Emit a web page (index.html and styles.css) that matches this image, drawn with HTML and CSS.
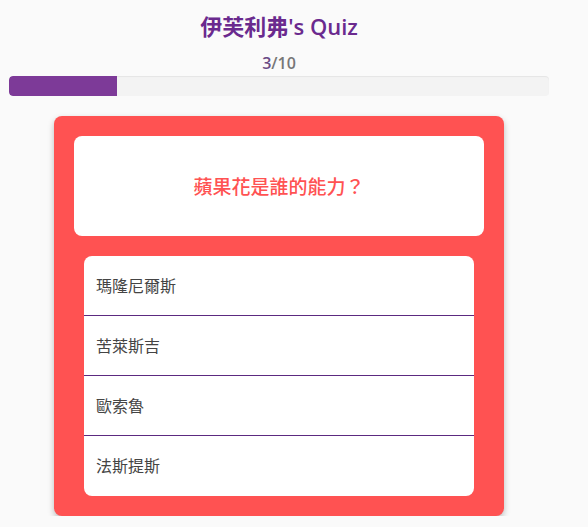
FILE: index.html
```html
<!DOCTYPE html>
<html lang="zh-Hant">
<head>
<meta charset="utf-8">
<link rel="stylesheet" href="styles.css">
</head>
<body>
<div class="wrap">
  <h1 class="title">伊芙利弗's Quiz</h1>
  <div class="count"><span class="cur">3</span>/10</div>
  <div class="track"><div class="fill" style="width:20%"></div></div>
  <div class="card">
    <div class="question">蘋果花是誰的能力？</div>
    <ul class="answers">
      <li>瑪隆尼爾斯</li>
      <li>苦萊斯吉</li>
      <li>歐索魯</li>
      <li>法斯提斯</li>
    </ul>
  </div>
</div>
</body>
</html>
```

FILE: styles.css
```css
html, body {
  margin: 0;
  padding: 0;
  background: #fafafa;
}
body {
  font-family: "Open Sans", "Noto Sans CJK TC", sans-serif;
}
.wrap {
  width: 540px;
  margin-left: 9px;
  display: flex;
  flex-direction: column;
  align-items: center;
}
.title {
  margin: 11px 0 0;
  height: 30px;
  line-height: 30px;
  font-size: 22px;
  font-weight: 600;
  color: #6a2a8e;
}
.count {
  margin-top: 11px;
  height: 22px;
  line-height: 22px;
  font-size: 16px;
  font-weight: 600;
  color: #777;
}
.count .cur { color: #6a4a86; }
.track {
  margin-top: 2px;
  width: 540px;
  height: 20px;
  border-radius: 4px;
  background: #f3f3f3;
  box-shadow: inset 0 1px 1px rgba(0,0,0,0.06);
  overflow: hidden;
}
.fill {
  height: 100%;
  background: #7d3a98;
  border-radius: 4px 0 0 4px;
}
.card {
  margin-top: 20px;
  width: 450px;
  box-sizing: border-box;
  padding: 20px 20px 20px;
  background: #ff5252;
  border-radius: 8px;
  box-shadow: 0 3px 6px rgba(0,0,0,0.25);
}
.question {
  height: 100px;
  background: #fff;
  border-radius: 8px;
  display: flex;
  align-items: center;
  justify-content: center;
  font-family: "Noto Sans CJK TC", sans-serif;
  font-size: 19px;
  font-weight: 500;
  color: #ff5252;
  padding-bottom: 1px;
  box-sizing: border-box;
}
.answers {
  list-style: none;
  margin: 20px 10px 0;
  padding: 0;
  background: #fff;
  border-radius: 8px;
  overflow: hidden;
}
.answers li {
  height: 60px;
  box-sizing: border-box;
  display: flex;
  align-items: center;
  padding-left: 12px;
  padding-bottom: 2px;
  font-family: "Noto Sans CJK TC", sans-serif;
  font-size: 16px;
  color: #444;
  border-bottom: 1px solid #5c2a80;
}
.answers li:last-child { border-bottom: none; }
```
